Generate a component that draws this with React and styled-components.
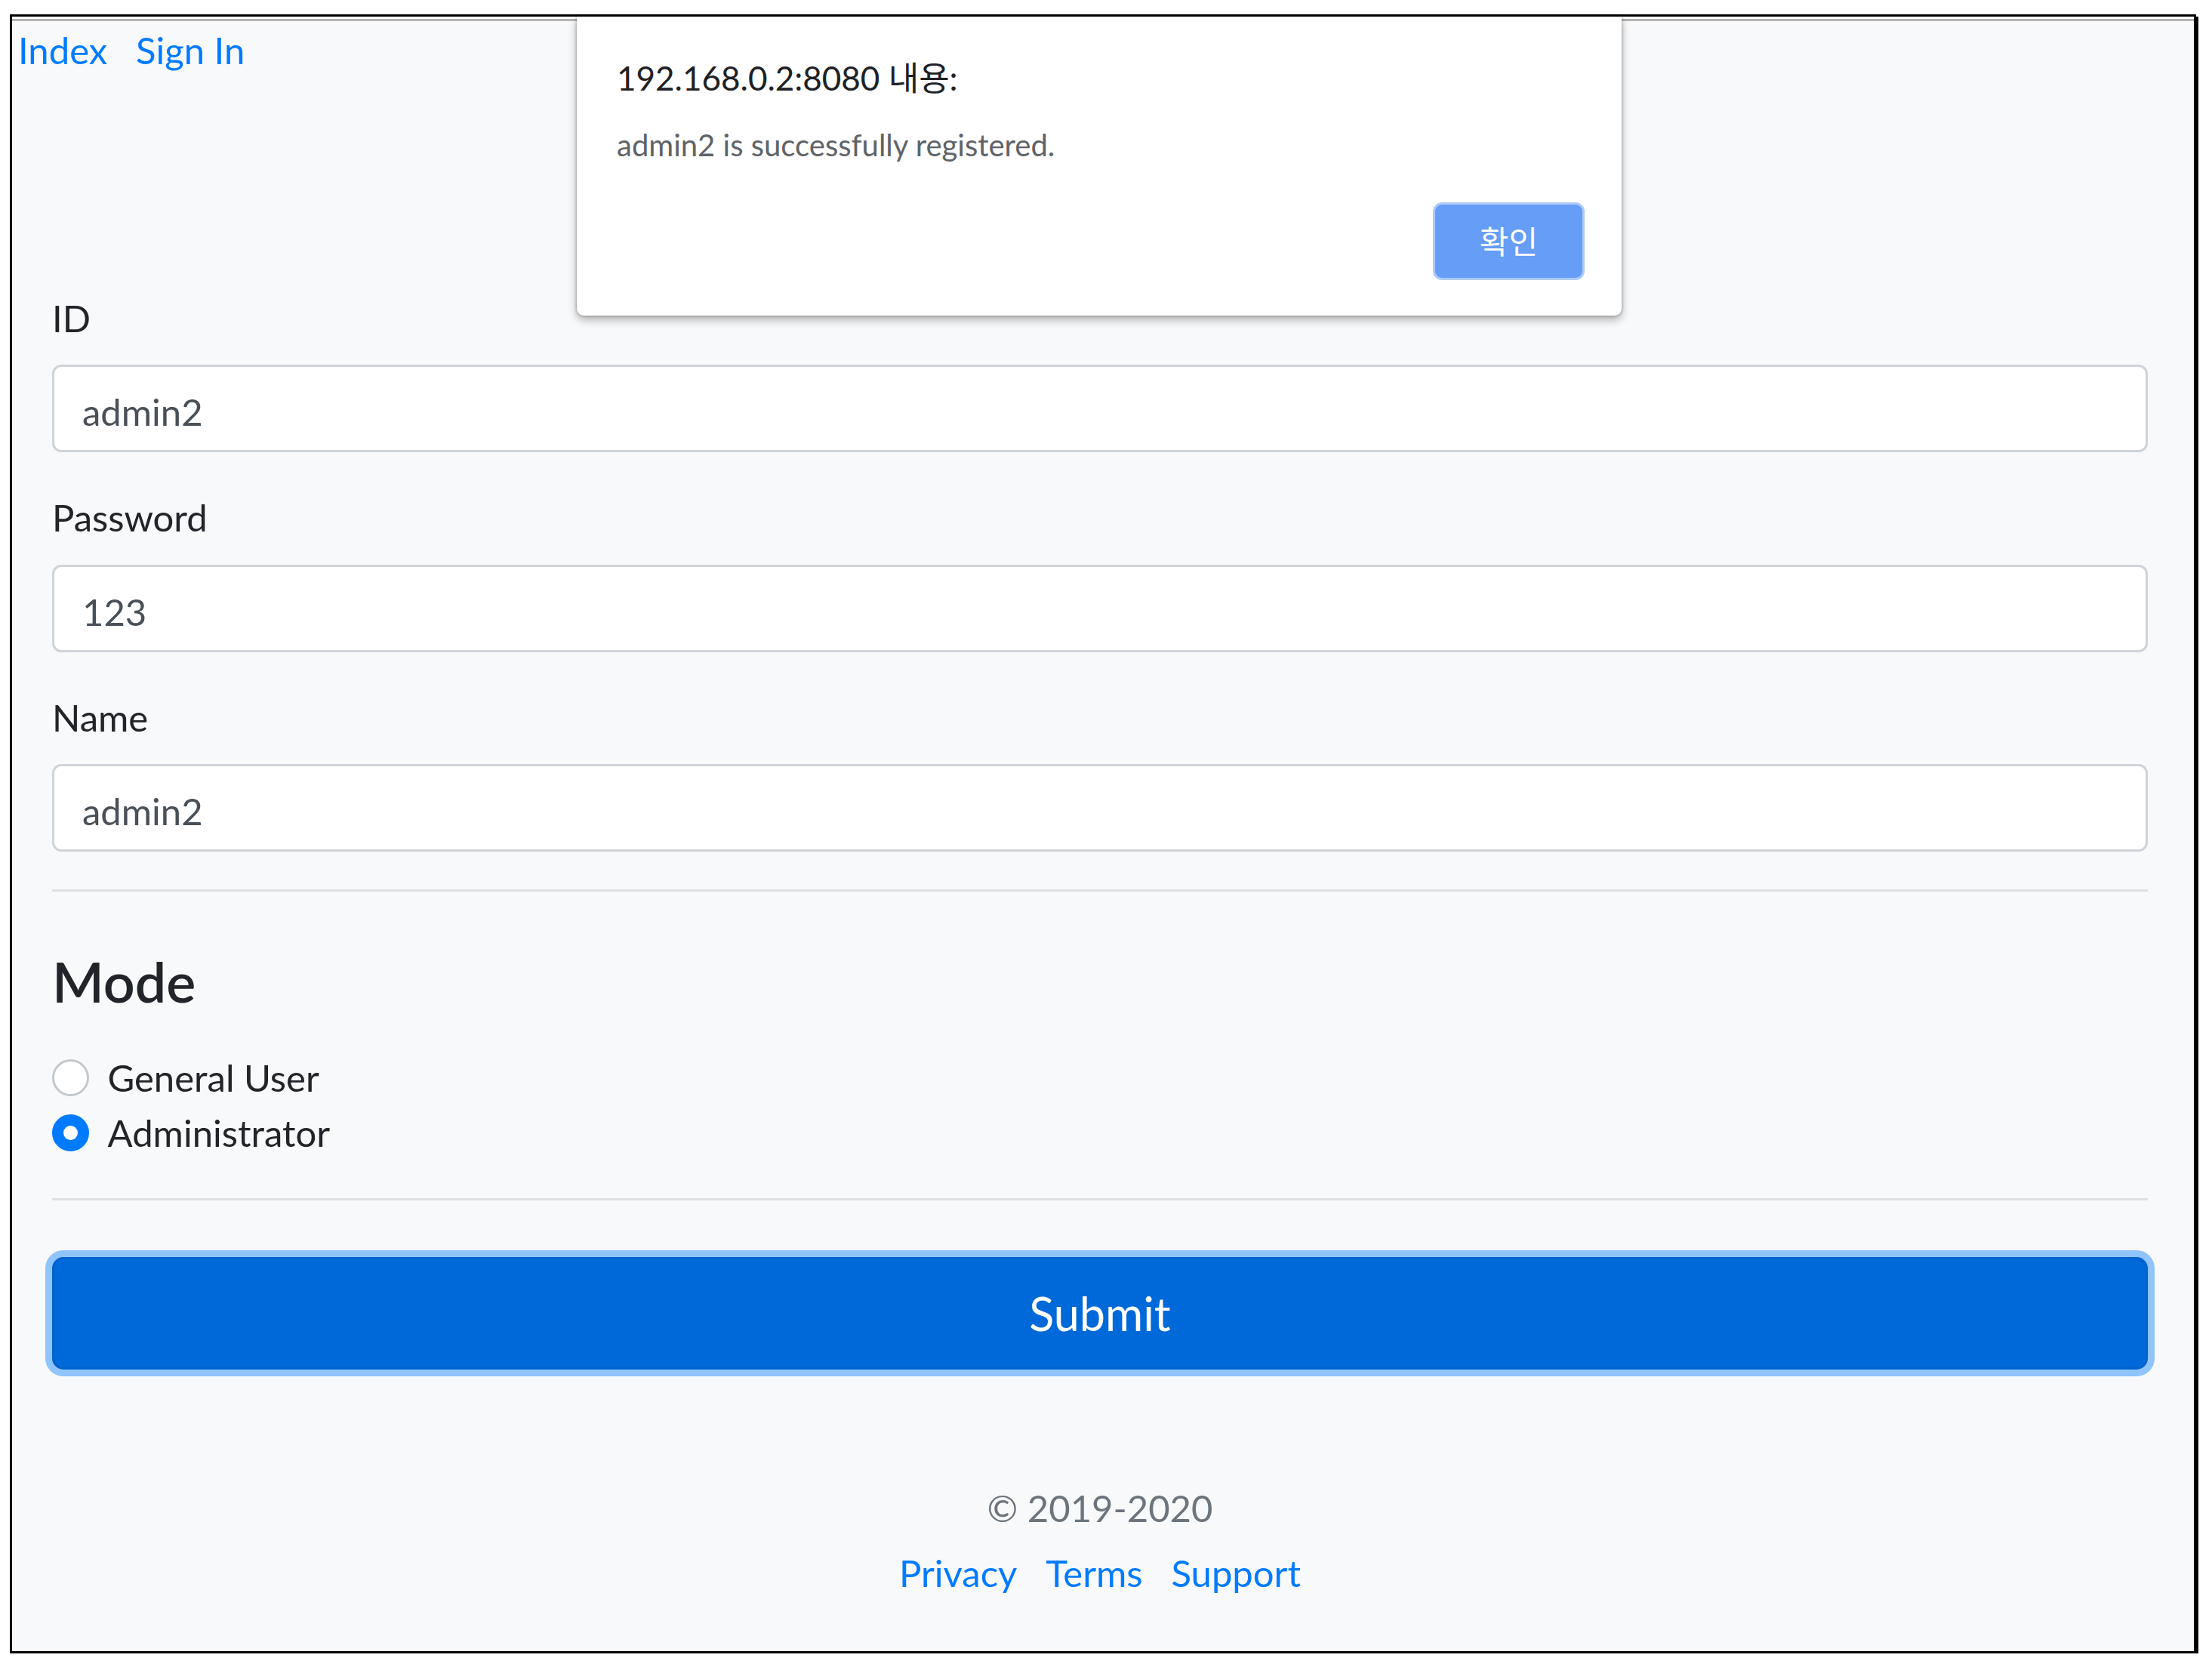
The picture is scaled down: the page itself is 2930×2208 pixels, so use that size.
import React from "react";
import styled, { createGlobalStyle } from "styled-components";

const GlobalStyle = createGlobalStyle`
  html, body {
    margin: 0;
    padding: 0;
    background: #ffffff;
  }
  body {
    font-family: Lato, "Noto Sans CJK KR", sans-serif;
    color: #212529;
  }
  * {
    box-sizing: border-box;
  }
`;

// screenshot frame
const Frame = styled.div`
  position: relative;
  margin: 19px 0 0 13px;
  width: 2896px;
  height: 2171px;
  border: 3px solid #000;
  box-shadow: 3px 3px 0 #000;
  padding-top: 3px;
  background: #ffffff;
`;

const Viewport = styled.div`
  height: 100%;
  border-top: 3px solid #b4b4b4;
  background: #f8f9fa;
`;

const Nav = styled.nav`
  display: flex;
  gap: 38px;
  padding: 2px 0 0 8px;
`;

const NavLink = styled.a`
  font-size: 49px;
  line-height: 73.5px;
  color: #007bff;
  text-decoration: none;
`;

const Main = styled.main`
  padding: 0 61px 0 53px;
`;

const Form = styled.form`
  margin-top: 281px;
`;

const Group = styled.div`
  margin-bottom: 50px;
`;

const Label = styled.label`
  display: block;
  font-size: 49px;
  line-height: 73.5px;
  margin-bottom: 25px;
  color: #212529;
`;

const Input = styled.input`
  display: block;
  width: 100%;
  height: 116px;
  padding: 8px 37px 0;
  border: 3px solid #ced4da;
  border-radius: 12px;
  background: #fff;
  font-family: Lato, sans-serif;
  font-size: 49px;
  color: #495057;
  outline: none;
`;

const Rule = styled.hr`
  margin: ${(p) => p.$top || 0}px 0 0;
  height: 0;
  border: 0;
  border-top: 3px solid #dfe0e1;
`;

const Heading = styled.h4`
  margin: 75px 0 0;
  font-size: 73.5px;
  line-height: 88.2px;
  font-weight: 600;
  color: #212529;
`;

const RadioList = styled.div`
  margin-top: 46.5px;
`;

const RadioRow = styled.label`
  display: flex;
  align-items: flex-start;
  font-size: 49px;
  line-height: 73.5px;
  color: #212529;
`;

const RadioDot = styled.span`
  flex: none;
  width: 49px;
  height: 49px;
  margin: 12px 24.5px 0 0;
  border-radius: 50%;
  display: flex;
  align-items: center;
  justify-content: center;
  background: ${(p) => (p.$checked ? "#007bff" : "#fff")};
  border: 3px solid ${(p) => (p.$checked ? "#007bff" : "#c3c8cd")};

  &::after {
    content: "";
    display: ${(p) => (p.$checked ? "block" : "none")};
    width: 19px;
    height: 19px;
    border-radius: 50%;
    background: #fff;
  }
`;

const SubmitButton = styled.button`
  display: block;
  width: 100%;
  margin-top: 75px;
  padding: 25.5px 49px;
  border: 3px solid #0062cc;
  border-radius: 15px;
  background: #0069d9;
  box-shadow: 0 0 0 9px rgba(38, 143, 255, 0.5);
  color: #fff;
  font-family: Lato, sans-serif;
  font-size: 61px;
  line-height: 91.5px;
`;

const Footer = styled.footer`
  margin-top: 147.5px;
  text-align: center;
  font-size: 49px;
  line-height: 73.5px;
`;

const Copy = styled.p`
  margin: 0 0 12px;
  color: #6c757d;
`;

const FooterLinks = styled.ul`
  display: flex;
  justify-content: center;
  gap: 38px;
  margin: 0;
  padding: 0;
  list-style: none;

  a {
    color: #007bff;
    text-decoration: none;
  }
`;

// chrome alert box
const Dialog = styled.div`
  position: absolute;
  top: 0;
  left: 748px;
  width: 1384px;
  height: 396px;
  padding: 51px 49px 47px 53px;
  display: flex;
  flex-direction: column;
  background: #fff;
  border-radius: 0 0 9px 9px;
  box-shadow: 0 6px 12px rgba(0, 0, 0, 0.28), 0 0 4px rgba(0, 0, 0, 0.35);
  z-index: 10;
`;

const DialogTitle = styled.div`
  font-size: 44px;
  line-height: 60px;
  color: #202124;
`;

const DialogMessage = styled.div`
  margin-top: 33px;
  font-size: 40px;
  line-height: 52px;
  color: #5f6368;
`;

const DialogActions = styled.div`
  margin-top: auto;
  display: flex;
  justify-content: flex-end;
`;

const OkButton = styled.button`
  width: 201px;
  height: 103px;
  padding: 0 0 4px;
  border: 3px solid #aecbfa;
  border-radius: 12px;
  background: #669df6;
  color: #fff;
  font-family: "Noto Sans CJK KR", sans-serif;
  font-size: 42px;
  display: flex;
  align-items: center;
  justify-content: center;
`;

const modes = [
  { label: "General User", checked: false },
  { label: "Administrator", checked: true },
];

export default function App() {
  return (
    <>
      <GlobalStyle />
      <Frame>
        <Viewport>
          <Nav>
            <NavLink href="#">Index</NavLink>
            <NavLink href="#">Sign In</NavLink>
          </Nav>
          <Main>
            <Form onSubmit={(e) => e.preventDefault()}>
              <Group>
                <Label>ID</Label>
                <Input defaultValue="admin2" />
              </Group>
              <Group>
                <Label>Password</Label>
                <Input defaultValue="123" />
              </Group>
              <Group>
                <Label>Name</Label>
                <Input defaultValue="admin2" />
              </Group>
              <Rule />
              <Heading>Mode</Heading>
              <RadioList>
                {modes.map((m) => (
                  <RadioRow key={m.label}>
                    <RadioDot $checked={m.checked} />
                    {m.label}
                  </RadioRow>
                ))}
              </RadioList>
              <Rule $top={49.7} />
              <SubmitButton type="submit">Submit</SubmitButton>
            </Form>
            <Footer>
              <Copy>© 2019-2020</Copy>
              <FooterLinks>
                <li><a href="#">Privacy</a></li>
                <li><a href="#">Terms</a></li>
                <li><a href="#">Support</a></li>
              </FooterLinks>
            </Footer>
          </Main>
        </Viewport>
        <Dialog>
          <DialogTitle>192.168.0.2:8080 내용:</DialogTitle>
          <DialogMessage>admin2 is successfully registered.</DialogMessage>
          <DialogActions>
            <OkButton>확인</OkButton>
          </DialogActions>
        </Dialog>
      </Frame>
    </>
  );
}
